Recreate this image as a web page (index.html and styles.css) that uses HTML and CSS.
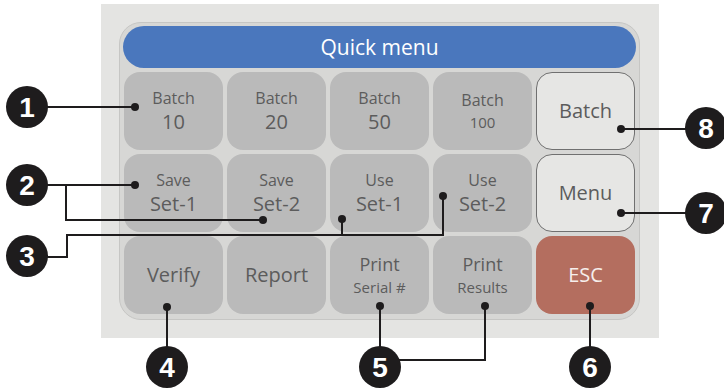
FILE: index.html
```html
<!DOCTYPE html>
<html lang="en">
<head>
    <meta charset="UTF-8">
    <meta name="viewport" content="width=device-width, initial-scale=1.0">
    <title>Quick menu</title>
    <link rel="stylesheet" href="styles.css">
</head>
<body>
<div id="stage">
    <div id="panel">
        <div id="screen">
            <div id="title">Quick menu</div>
            <div id="keys">
                <div class="key"><span class="sm">Batch</span><span class="lg">10</span></div>
                <div class="key"><span class="sm">Batch</span><span class="lg">20</span></div>
                <div class="key"><span class="sm">Batch</span><span class="lg">50</span></div>
                <div class="key"><span class="sm">Batch</span><span class="xs">100</span></div>
                <div class="key light"><span class="one">Batch</span></div>

                <div class="key"><span class="sm">Save</span><span class="lg">Set-1</span></div>
                <div class="key"><span class="sm">Save</span><span class="lg">Set-2</span></div>
                <div class="key"><span class="sm">Use</span><span class="lg">Set-1</span></div>
                <div class="key"><span class="sm">Use</span><span class="lg">Set-2</span></div>
                <div class="key light"><span class="one">Menu</span></div>

                <div class="key"><span class="one">Verify</span></div>
                <div class="key"><span class="one">Report</span></div>
                <div class="key"><span class="md">Print</span><span class="xs">Serial #</span></div>
                <div class="key"><span class="md">Print</span><span class="xs">Results</span></div>
                <div class="key esc"><span class="one">ESC</span></div>
            </div>
        </div>
    </div>

    <!-- callouts -->
    <svg id="callouts" width="724" height="389" viewBox="0 0 724 389">
        <g class="lines">
            <path d="M40 107 H135"/>
            <path d="M40 185 H135 M66 185 V220 H263"/>
            <path d="M40 257 H67 V235 H443 V196 M342 235 V219"/>
            <path d="M167 307 V355"/>
            <path d="M380 306 V355 M485 306 V360 H395"/>
            <path d="M590 306 V355"/>
            <path d="M621 213 H695"/>
            <path d="M621 129 H695"/>
        </g>
        <g class="dots">
            <circle cx="135" cy="107" r="4"/>
            <circle cx="135" cy="185" r="4"/>
            <circle cx="263" cy="220" r="4"/>
            <circle cx="342" cy="219" r="4"/>
            <circle cx="443" cy="196" r="4"/>
            <circle cx="167" cy="307" r="4"/>
            <circle cx="380" cy="306" r="4"/>
            <circle cx="485" cy="306" r="4"/>
            <circle cx="590" cy="306" r="4"/>
            <circle cx="621" cy="213" r="4"/>
            <circle cx="621" cy="129" r="4"/>
        </g>
        <g class="badges">
            <circle cx="27" cy="107" r="21"/>
            <circle cx="27" cy="185" r="21"/>
            <circle cx="27" cy="256" r="21"/>
            <circle cx="167" cy="367" r="21"/>
            <circle cx="380" cy="367" r="21"/>
            <circle cx="590" cy="367" r="21"/>
            <circle cx="706" cy="213" r="21"/>
            <circle cx="706" cy="128" r="21"/>
        </g>
        <g class="nums">
            <text x="27" y="117">1</text>
            <text x="27" y="195">2</text>
            <text x="27" y="266">3</text>
            <text x="167" y="377">4</text>
            <text x="380" y="377">5</text>
            <text x="590" y="377">6</text>
            <text x="706" y="223">7</text>
            <text x="706" y="138">8</text>
        </g>
    </svg>
</div>
</body>
</html>
```

FILE: styles.css
```css
*{
    margin: 0;
    padding: 0;
    box-sizing: border-box;
}
body{
    background: #fff;
    font-family: "Open Sans", "Noto Sans", sans-serif;
}
#stage{
    width: 724px;
    height: 389px;
    position: relative; /* callouts sit over the panel */
    padding: 4px 0 0 101px;
}
#panel{
    width: 558px;
    height: 334px;
    background: #e4e4e2;
    padding: 18px 0 0 18px;
}
#screen{
    width: 521px;
    height: 298px;
    background: #d7d7d5;
    border: 1px solid #c6c6c4;
    border-radius: 22px;
    padding: 3px 3px 0 3px;
}
#title{
    height: 42px;
    border-radius: 21px;
    background: #4a77bd;
    color: #fff;
    font-size: 21px;
    line-height: 42px;
    text-align: center;
    margin-bottom: 4px;
}
#keys{
    display: grid;
    grid-template-columns: repeat(5, 99px);
    grid-template-rows: repeat(3, 78px);
    gap: 4px;
    margin-left: 1px;
}
.key{
    background: #bababa;
    border-radius: 16px;
    color: #5c5c5c;
    display: flex;
    flex-direction: column;
    align-items: center;
    justify-content: center;
    gap: 2px;
}
.key .sm{
    font-size: 16px;
    line-height: 20px;
}
.key .lg{
    font-size: 20px;
    line-height: 24px;
}
.key .md{
    font-size: 18px;
    line-height: 22px;
}
.key .xs{
    font-size: 15px;
    line-height: 21px;
}
.key .one{
    font-size: 20px;
    line-height: 26px;
}
.key.light{
    background: #e6e6e4;
    border: 1.5px solid #707070;
}
.key.esc{
    background: #b46e5f;
    color: #f6eeec;
}
#callouts{
    position: absolute;
    left: 0;
    top: 0;
}
.lines path{
    fill: none;
    stroke: #1e1c1d;
    stroke-width: 2;
}
.dots circle, .badges circle{
    fill: #1e1c1d;
}
.nums text{
    fill: #fff;
    font-family: "Liberation Sans", Arial, sans-serif;
    font-weight: bold;
    font-size: 28px;
    text-anchor: middle;
}
```
